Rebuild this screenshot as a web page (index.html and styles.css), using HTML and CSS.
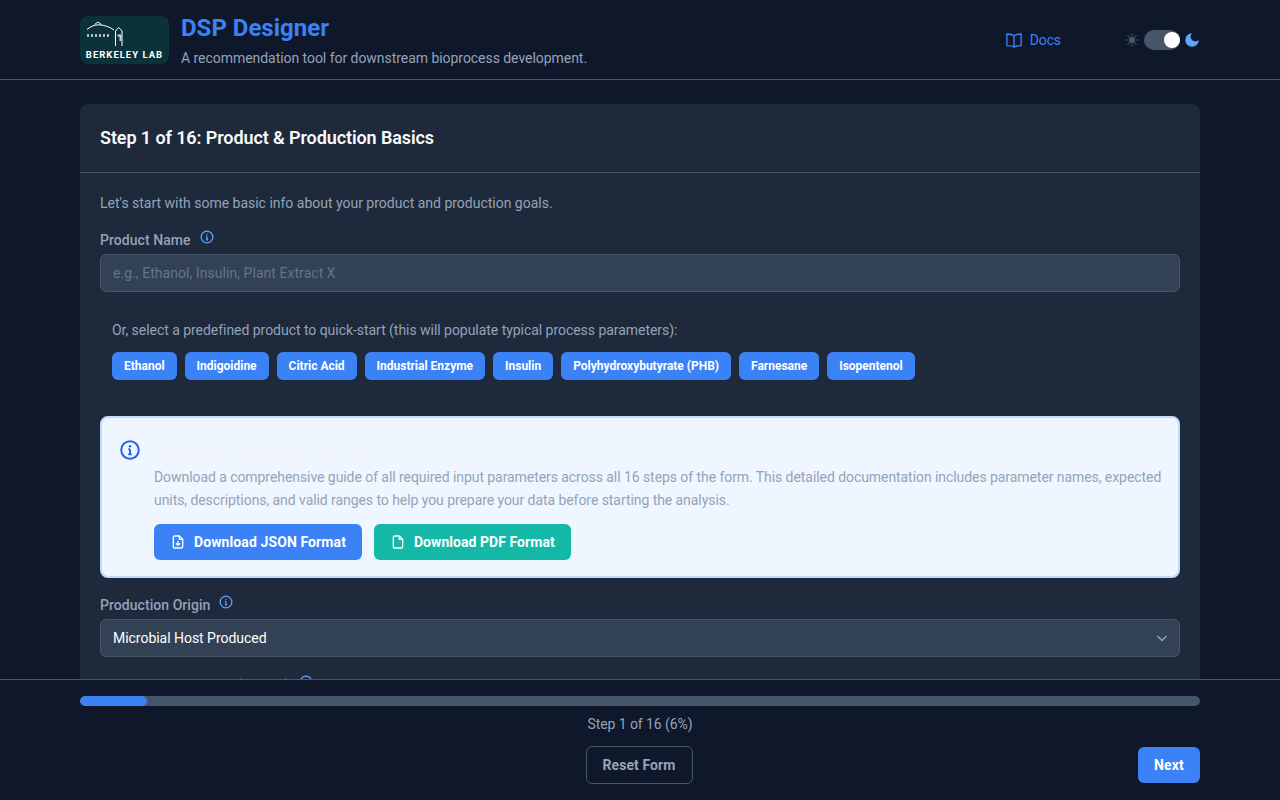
FILE: index.html
```html
<!DOCTYPE html>
<html lang="en">
<head>
<meta charset="utf-8">
<title>DSP Designer</title>
<link rel="stylesheet" href="styles.css">
</head>
<body>
<div class="app">
  <header class="topbar">
    <div class="wrap topbar-row">
      <div class="brand">
        <div class="logo">
          <svg width="89" height="48" viewBox="0 0 89 48" fill="none">
            <g stroke="#fff" stroke-width="1">
              <path d="M7 13.500C11 10 15 9 18 8.800C24 8.800 30 11 34 14"/>
              <path d="M14.500 8.500L18 6L21.500 8.500"/>
              <path d="M35.500 15V30M42 15V30M35.500 15L38.700 11.500L42 15"/>
            </g>
            <path d="M37.500 19.500H40.500V25" stroke="#cbd5e1" stroke-width="2"/>
            <path d="M7 19.500H31" stroke="#d1d5db" stroke-width="2.500" stroke-dasharray="2 2"/>
            <text x="44.500" y="42" class="logo-text" text-anchor="middle">BERKELEY LAB</text>
          </svg>
        </div>
        <div class="brand-text">
          <h1 class="title">DSP Designer</h1>
          <p class="subtitle">A recommendation tool for downstream bioprocess development.</p>
        </div>
      </div>
      <div class="top-actions">
        <a class="docs" href="#">
          <svg width="18" height="18" viewBox="0 0 24 24" fill="none" stroke="currentColor" stroke-width="1.800" stroke-linejoin="round" stroke-linecap="round"><path d="M12 6.500C10 4.800 7 4 2.500 4V19.500C7 19.500 10 20 12 21.500C14 20 17 19.500 21.500 19.500V4C17 4 14 4.800 12 6.500ZM12 6.500V21.500"/></svg>
          <span>Docs</span>
        </a>
        <div class="theme">
          <svg width="14" height="14" viewBox="0 0 24 24" fill="#475569" stroke="#475569" stroke-width="2" stroke-linecap="round"><circle cx="12" cy="12" r="4.500"/><path d="M12 2v2M12 20v2M2 12h2M20 12h2M5 5l1.500 1.500M17.500 17.500L19 19M5 19l1.500-1.500M17.500 6.500L19 5"/></svg>
          <span class="switch"><span class="knob"></span></span>
          <svg class="moon" width="18" height="18" viewBox="0 0 24 24" fill="#60a5fa"><path d="M12 3a6 6 0 0 0 9 9 9 9 0 1 1-9-9Z"/></svg>
        </div>
      </div>
    </div>
  </header>

  <main class="wrap content">
    <section class="card">
      <div class="card-head"><h2>Step 1 of 16: Product &amp; Production Basics</h2></div>
      <div class="card-body">
        <p class="intro">Let's start with some basic info about your product and production goals.</p>

        <div class="label-row">
          <label class="label">Product Name</label>
          <svg class="hint" width="14" height="14" viewBox="0 0 24 24" fill="none" stroke="#60a5fa" stroke-width="2.200"><circle cx="12" cy="12" r="10"/><path d="M12 11v6M10 11h2M10 17h4"/><circle cx="12" cy="7.500" r="1.200" fill="#60a5fa" stroke="none"/></svg>
        </div>
        <div class="field placeholder">e.g., Ethanol, Insulin, Plant Extract X</div>

        <div class="presets">
          <p class="presets-title">Or, select a predefined product to quick-start (this will populate typical process parameters):</p>
          <div class="chips">
            <button class="chip">Ethanol</button>
            <button class="chip">Indigoidine</button>
            <button class="chip">Citric Acid</button>
            <button class="chip">Industrial Enzyme</button>
            <button class="chip">Insulin</button>
            <button class="chip">Polyhydroxybutyrate (PHB)</button>
            <button class="chip">Farnesane</button>
            <button class="chip">Isopentenol</button>
          </div>
        </div>

        <div class="notice">
          <svg class="notice-icon" width="20" height="20" viewBox="0 0 24 24" fill="none" stroke="#2563eb" stroke-width="2.400"><circle cx="12" cy="12" r="10.500"/><path d="M12 11v6M10 11h2M10 17h4"/><circle cx="12" cy="7.500" r="1.500" fill="#2563eb" stroke="none"/></svg>
          <div class="notice-body">
            <h3 class="notice-title">Analyzing a Complex Process?</h3>
            <p class="notice-text">Download a comprehensive guide of all required input parameters across all 16 steps of the form. This detailed documentation includes parameter names, expected units, descriptions, and valid ranges to help you prepare your data before starting the analysis.</p>
            <div class="notice-actions">
              <button class="dl dl-blue">
                <svg width="16" height="16" viewBox="0 0 24 24" fill="none" stroke="#fff" stroke-width="2" stroke-linejoin="round" stroke-linecap="round"><path d="M14 3H7a2 2 0 0 0-2 2v14a2 2 0 0 0 2 2h10a2 2 0 0 0 2-2V8Z"/><path d="M14 3v5h5M12 11v6M9.500 14.500L12 17l2.500-2.500"/></svg>
                Download JSON Format
              </button>
              <button class="dl dl-teal">
                <svg width="16" height="16" viewBox="0 0 24 24" fill="none" stroke="#fff" stroke-width="2" stroke-linejoin="round"><path d="M14 3H7a2 2 0 0 0-2 2v14a2 2 0 0 0 2 2h10a2 2 0 0 0 2-2V8Z"/><path d="M14 3v5h5"/></svg>
                Download PDF Format
              </button>
            </div>
          </div>
        </div>

        <div class="label-row">
          <label class="label">Production Origin</label>
          <svg class="hint" width="14" height="14" viewBox="0 0 24 24" fill="none" stroke="#60a5fa" stroke-width="2.200"><circle cx="12" cy="12" r="10"/><path d="M12 11v6M10 11h2M10 17h4"/><circle cx="12" cy="7.500" r="1.200" fill="#60a5fa" stroke="none"/></svg>
        </div>
        <div class="field select">
          <span>Microbial Host Produced</span>
          <svg width="12" height="12" viewBox="0 0 12 12" fill="none" stroke="#94a3b8" stroke-width="1.500"><path d="M1.500 4L6 8.500L10.500 4"/></svg>
        </div>

        <div class="label-row">
          <label class="label">Target Process Scale (kg/day)</label>
          <svg class="hint" width="14" height="14" viewBox="0 0 24 24" fill="none" stroke="#60a5fa" stroke-width="2.200"><circle cx="12" cy="12" r="10"/><path d="M12 11v6M10 11h2M10 17h4"/><circle cx="12" cy="7.500" r="1.200" fill="#60a5fa" stroke="none"/></svg>
        </div>
      </div>
    </section>
  </main>

  <footer class="bottom">
    <div class="wrap">
      <div class="progress"><div class="progress-fill"></div></div>
      <p class="progress-label">Step 1 of 16 (6%)</p>
      <div class="bottom-actions">
        <button class="reset">Reset Form</button>
        <button class="next">Next</button>
      </div>
    </div>
  </footer>
</div>
</body>
</html>
```
FILE: styles.css
```css
* { box-sizing: border-box; }
html, body { margin: 0; height: 100%; }
body {
  background: #0f172a;
  color: #fff;
  font-family: Roboto, "Liberation Sans", sans-serif;
  overflow: hidden;
}
h1, h2, h3, p { margin: 0; }
button { font-family: inherit; cursor: pointer; border: 0; }
.app { height: 800px; display: flex; flex-direction: column; position: relative; }
.wrap { width: 1120px; margin: 0 auto; }

.topbar { height: 80px; border-bottom: 1px solid #475569; flex: none; }
.topbar-row { height: 79px; display: flex; align-items: center; justify-content: space-between; }
.brand { display: flex; align-items: center; gap: 12px; }
.logo { width: 89px; height: 48px; background: #0c3239; border-radius: 8px; overflow: hidden; }
.logo svg { display: block; }
.logo-text { fill: #fff; font: 700 9.500px Roboto, sans-serif; letter-spacing: 1px; }
.title { font-size: 24px; line-height: 32px; font-weight: 700; color: #3b82f6; }
.subtitle { font-size: 14px; line-height: 20px; margin-top: 4px; color: #94a3b8; letter-spacing: -.045px; }
.top-actions { display: flex; align-items: center; }
.docs { display: flex; align-items: center; gap: 7px; color: #3b82f6; font-size: 14px; text-decoration: none; margin-right: 64px; letter-spacing: -.1px; }
.theme { display: flex; align-items: center; gap: 5px; }
.moon { margin: 0 -1px 0 -2px; }
.switch { width: 36px; height: 20px; border-radius: 10px; background: #475569; display: block; position: relative; }
.knob { position: absolute; top: 2px; right: 0; width: 16px; height: 16px; border-radius: 50%; background: #fff; }

.content { flex: 1; min-height: 0; padding-top: 24px; }
.card { background: #1e293b; border-radius: 8px 8px 0 0; height: 100%; overflow: hidden; }
.card-head { height: 69px; padding: 0 20px; border-bottom: 1px solid #475569; display: flex; align-items: center; }
.card-head h2 { font-size: 18px; line-height: 28px; font-weight: 600; color: #f8fafc; letter-spacing: -.095px; }
.card-body { padding: 20px; }
.intro { font-size: 14px; line-height: 20px; color: #94a3b8; margin-bottom: 17px; letter-spacing: -.01px; }
.label-row { display: flex; align-items: flex-start; gap: 9px; height: 20px; margin-bottom: 4px; }
.label { font-size: 14px; line-height: 20px; font-weight: 500; color: #94a3b8; letter-spacing: .05px; }
.field { height: 38px; border: 1px solid #475569; border-radius: 6px; background: #334155; padding: 0 12px; font-size: 14px; display: flex; align-items: center; }
.placeholder { color: #64748b; letter-spacing: .05px; }
.select { color: #fff; justify-content: space-between; padding-right: 11px; margin-bottom: 18px; letter-spacing: -.03px; }

.presets { padding: 28px 12px 0; margin-bottom: 36px; }
.presets-title { font-size: 14px; line-height: 20px; color: #94a3b8; margin-bottom: 12px; letter-spacing: -.04px; }
.chips { display: flex; gap: 8px; }
.chip { height: 28px; padding: 0 12px; background: #3b82f6; color: #fff; font-size: 12px; font-weight: 700; border-radius: 6px; letter-spacing: -.01px; }

.notice { height: 162px; border: 2px solid #bfdbfe; border-radius: 8px; background: #eff6ff; padding: 22px 16px 0 18px; display: flex; gap: 14px; margin-bottom: 17px; }
.notice-icon { flex: none; }
.notice-title { font-size: 16px; line-height: 24px; font-weight: 600; color: #f1f5f9; margin-top: -3px; margin-bottom: 5px; }
.notice-text { font-size: 14px; line-height: 23px; color: #94a3b8; letter-spacing: -.065px; }
.notice-actions { display: flex; gap: 12px; margin-top: 12px; }
.dl { height: 36px; padding: 0 16px; border-radius: 6px; color: #fff; font-size: 14px; font-weight: 700; display: flex; align-items: center; gap: 8px; }
.dl-blue { background: #3b82f6; letter-spacing: .1px; }
.dl-teal { background: #14b8a6; letter-spacing: .05px; }

.bottom { position: absolute; left: 0; right: 0; bottom: 0; height: 121px; background: #0f172a; border-top: 1px solid #475569; padding-top: 16px; }
.progress { height: 10px; background: #475569; border-radius: 5px; overflow: hidden; }
.progress-fill { width: 6%; height: 100%; background: #3b82f6; border-radius: 5px; }
.progress-label { text-align: center; font-size: 14px; line-height: 20px; color: #94a3b8; margin-top: 8px; letter-spacing: -.08px; }
.bottom-actions { display: flex; justify-content: center; align-items: center; position: relative; margin-top: 12px; }
.reset { height: 38px; padding: 0 16px; margin-right: 2px; background: transparent; border: 1px solid #475569; border-radius: 6px; color: #94a3b8; font-size: 14px; font-weight: 700; letter-spacing: .08px; }
.next { position: absolute; right: 0; top: 1px; height: 36px; padding: 0 16px; background: #3b82f6; border-radius: 6px; color: #fff; font-size: 14px; font-weight: 700; letter-spacing: .2px; }
```
